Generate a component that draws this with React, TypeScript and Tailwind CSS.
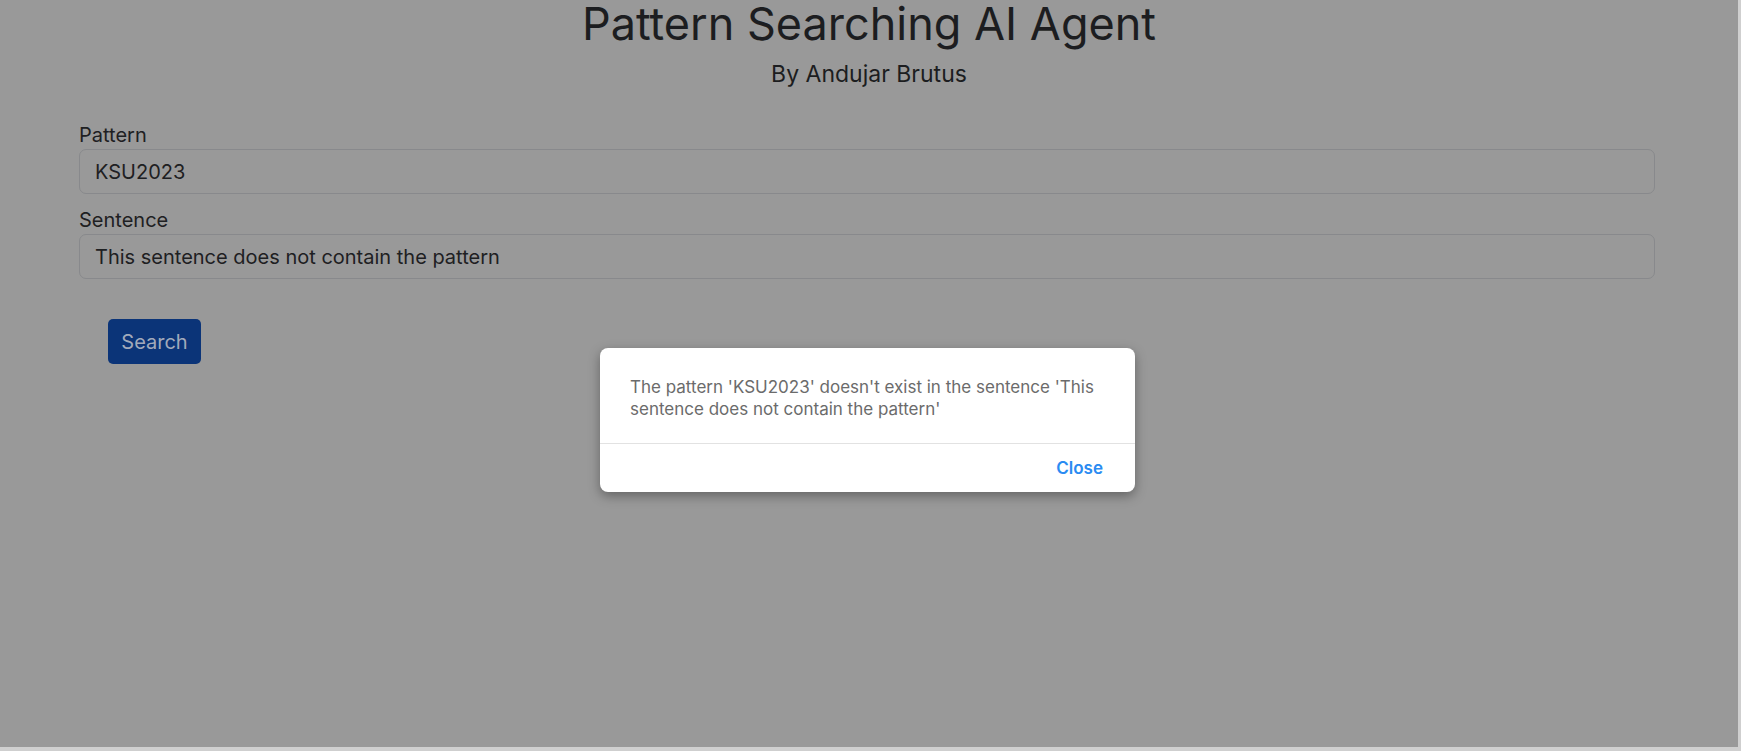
const App = () => {
    return (
        <div className="w-[1741px] h-[751px] bg-[#cfcfcf] font-['Inter',sans-serif]">
            <div className="relative w-[1738px] h-[747px] bg-[#999999]">
                {/* Header */}
                <div className="flex flex-col items-center pt-[1px]">
                    <h1 className="text-[45px] leading-none text-[#1c1d20] font-normal">Pattern Searching AI Agent</h1>
                    <h2 className="mt-[17px] text-[23px] leading-none text-[#1c1d20] font-normal">By Andujar Brutus</h2>
                </div>

                {/* Form */}
                <div className="pl-[79px] pr-[83px] pt-[37px] flex flex-col">
                    <label className="text-[20px] leading-[24px] text-[#1e2022] mb-[2px]">Pattern</label>
                    <div className="h-[45px] border border-[#88898c] rounded-[7px] pl-[15px] flex items-center text-[20px] leading-[24px] text-[#1e2022]">
                        KSU2023
                    </div>
                    <label className="mt-[14px] text-[20px] leading-[24px] text-[#1e2022] mb-[2px]">Sentence</label>
                    <div className="h-[45px] border border-[#88898c] rounded-[7px] pl-[15px] flex items-center text-[20px] leading-[24px] text-[#1e2022]">
                        This sentence does not contain the pattern
                    </div>
                    <div className="pt-[40px] pl-[29px]">
                        <button className="h-[45px] w-[93px] rounded-[5px] bg-[#0b3478] text-[20px] text-[#a2aabb] flex items-center justify-center">
                            Search
                        </button>
                    </div>
                </div>

                {/* Alert dialog */}
                <div className="absolute left-[600px] top-[348px] w-[535px] bg-white rounded-[8px] shadow-[0_4px_12px_rgba(0,0,0,0.35)]">
                    <p className="pl-[30px] pr-[30px] pt-[28px] pb-[23px] text-[17px] leading-[22px] text-[#6b6b6b]">
                        The pattern 'KSU2023' doesn't exist in the sentence 'This sentence does not contain the pattern'
                    </p>
                    <div className="border-t border-[#e2e2e2] h-[49px] flex items-center justify-end pr-[32px]">
                        <span className="text-[17px] leading-[22px] font-semibold text-[#2a8bf2]">Close</span>
                    </div>
                </div>
            </div>
        </div>
    );
};

export default App;
